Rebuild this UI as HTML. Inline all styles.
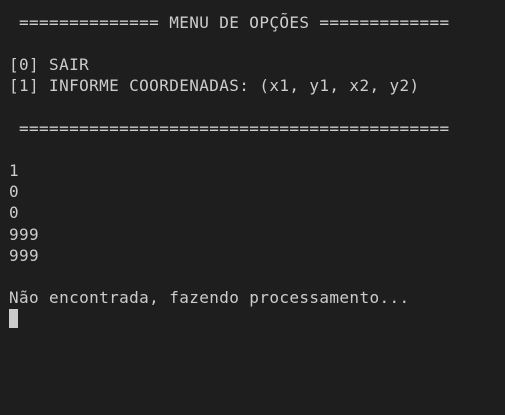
<!DOCTYPE html>
<html><head><meta charset="utf-8"><style>
html,body{margin:0;padding:0;background:#1e1e1e;width:505px;height:415px;overflow:hidden}
pre{margin:0;padding:12px 0 0 9px;font-family:"DejaVu Sans Mono","Liberation Mono",monospace;font-size:16px;letter-spacing:0.38px;line-height:21.15px;color:#cccccc}
.c{display:inline-block;width:9px;height:19px;background:#cccccc;vertical-align:top;margin-top:1px}
</style></head><body><pre> ============== MENU DE OPÇÕES =============

[0] SAIR
[1] INFORME COORDENADAS: (x1, y1, x2, y2)

 ===========================================

1
0
0
999
999

Não encontrada, fazendo processamento...
<span class="c"></span></pre></body></html>
